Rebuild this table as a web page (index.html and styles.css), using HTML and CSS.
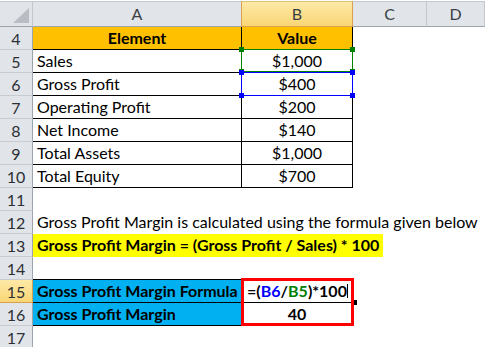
FILE: index.html
```html
<!DOCTYPE html>
<html>
<head>
<meta charset="utf-8">
<link rel="stylesheet" href="styles.css">
</head>
<body>
<div class="sheet">
  <div class="corner"><svg class="tri" width="16" height="15" viewBox="0 0 16 15"><polygon points="16,0 16,15 0,15" fill="#b9bdc3"/></svg></div>
  <div class="ch ch-a">A</div>
  <div class="ch sel">B</div>
  <div class="ch">C</div>
  <div class="ch ch-last">D</div>

  <div class="rh">4</div>
  <div class="c t hd">Element</div>
  <div class="c t hd">Value</div>
  <div class="c"></div><div class="c"></div>

  <div class="rh">5</div>
  <div class="c t">Sales</div>
  <div class="c t num ref">$1,000<div class="refbox green-box"><i class="h tl"></i><i class="h tr"></i><i class="h bl"></i><i class="h br"></i></div></div>
  <div class="c"></div><div class="c"></div>

  <div class="rh">6</div>
  <div class="c t">Gross Profit</div>
  <div class="c t num ref">$400<div class="refbox blue-box"><i class="h tl"></i><i class="h tr"></i><i class="h bl"></i><i class="h br"></i></div></div>
  <div class="c"></div><div class="c"></div>

  <div class="rh">7</div>
  <div class="c t">Operating Profit</div>
  <div class="c t num">$200</div>
  <div class="c"></div><div class="c"></div>

  <div class="rh">8</div>
  <div class="c t">Net Income</div>
  <div class="c t num">$140</div>
  <div class="c"></div><div class="c"></div>

  <div class="rh">9</div>
  <div class="c t">Total Assets</div>
  <div class="c t num">$1,000</div>
  <div class="c"></div><div class="c"></div>

  <div class="rh">10</div>
  <div class="c t">Total Equity</div>
  <div class="c t num">$700</div>
  <div class="c"></div><div class="c"></div>

  <div class="rh">11</div>
  <div class="c span"></div>

  <div class="rh">12</div>
  <div class="c span">Gross Profit Margin is calculated using the formula given below</div>

  <div class="rh">13</div>
  <div class="c span"><span class="hl">Gross Profit Margin = (Gross Profit / Sales) * 100</span></div>

  <div class="rh">14</div>
  <div class="c bb"></div>
  <div class="c bb"></div>
  <div class="c"></div><div class="c"></div>

  <div class="rh rsel">15</div>
  <div class="c t cy">Gross Profit Margin Formula</div>
  <div class="c t num b edit"><span class="f">=(<span class="blue">B6</span>/<span class="green">B5</span>)*100</span><span class="caret"></span><div class="fill-handle"></div><div class="redbox"></div></div>
  <div class="c"></div><div class="c"></div>

  <div class="rh">16</div>
  <div class="c t cy">Gross Profit Margin</div>
  <div class="c t num b">40</div>
  <div class="c"></div><div class="c"></div>

  <div class="rh">17</div>
  <div class="c span"></div>
</div>
</body>
</html>
```
FILE: styles.css
```css
* { box-sizing: border-box; }
html, body { margin: 0; padding: 0; background: #fff; }
body { font-family: Lato, "Open Sans", sans-serif; font-size: 16px; color: #000; overflow: hidden; }

.sheet {
  display: grid;
  grid-template-columns: 33px 209px 111px 74px 1fr;
  grid-template-rows: 27px repeat(14, 23px);
  width: 485px;
  height: 347px;
  overflow: hidden;
}

.corner {
  margin-top: 1px;
  background: #e1e4e9;
  border-top: 1px solid #c4c8ce;
  border-right: 1px solid #c4c8ce;
  border-bottom: 1px solid #9ea4ab;
  display: flex;
  align-items: flex-end;
  justify-content: flex-end;
  padding: 0 3px 3px 0;
}
.tri { display: block; }

.ch {
  margin-top: 1px;
  background: #e1e4e9;
  border-top: 1px solid #c4c8ce;
  border-right: 1px solid #c4c8ce;
  border-bottom: 1px solid #9ea4ab;
  display: flex;
  align-items: center;
  justify-content: center;
  font-size: 16px;
  color: #3a3f46;
  padding-bottom: 1px;
}
.ch-a { border-right-color: #d8a14e; }
.ch.sel {
  background: linear-gradient(#fde9a7, #f9d675);
  border-right-color: #d8a14e;
  border-bottom-color: #d8a14e;
  border-top-color: #e0c07a;
}

.rh {
  background: #e1e4e9;
  border-right: 1px solid #9ea4ab;
  border-bottom: 1px solid #c8ccd2;
  display: flex;
  align-items: center;
  justify-content: center;
  font-size: 16px;
  color: #2c3035;
  padding-top: 1px;
}
.rh.rsel {
  background: linear-gradient(#fde9a7, #f9d675);
  border-bottom-color: #d8a14e;
  border-right-color: #d8a14e;
}

.c {
  line-height: 22px;
  padding: 0 4px;
  white-space: nowrap;
  overflow: visible;
}
.c.span { grid-column: 2 / 6; }
.t { border-right: 1px solid #000; border-bottom: 1px solid #000; }
.bb { border-bottom: 1px solid #000; }
.hd { background: #ffc000; font-weight: 700; text-align: center; }
.num { text-align: center; }
.b { font-weight: 700; }
.cy { background: #00b0f0; font-weight: 700; }

.hl {
  display: inline-block;
  background: #ffff00;
  font-weight: 700;
  width: 350px;
  margin-left: -4px;
  padding-left: 4px;
  height: 23px;
}

.ref, .edit { position: relative; }
.blue { color: #0000ff; }
.green { color: #008000; }
.caret {
  position: absolute;
  left: 105px;
  top: 4px;
  width: 1px;
  height: 14px;
  background: #000;
}

.refbox {
  position: absolute;
  left: -1px;
  top: -1px;
  right: -1px;
  bottom: -1px;
}
.green-box { border: 1px solid #008000; bottom: 0; }
.blue-box { border: 1px solid #0000ff; }
.h {
  position: absolute;
  width: 5px;
  height: 5px;
}
.green-box .h { background: #008000; }
.blue-box .h { background: #0000ff; }
.h.tl { left: -3px; top: -3px; }
.h.tr { right: -3px; top: -3px; }
.h.bl { left: -3px; bottom: -3px; }
.h.br { right: -3px; bottom: -3px; }

.redbox {
  position: absolute;
  left: -1px;
  right: -2px;
  top: -2px;
  height: 48px;
  border: 3px solid #ff0000;
}
.fill-handle {
  position: absolute;
  right: -5px;
  bottom: -3px;
  width: 5px;
  height: 5px;
  background: #000;
  outline: 1px solid #fff;
}
```
